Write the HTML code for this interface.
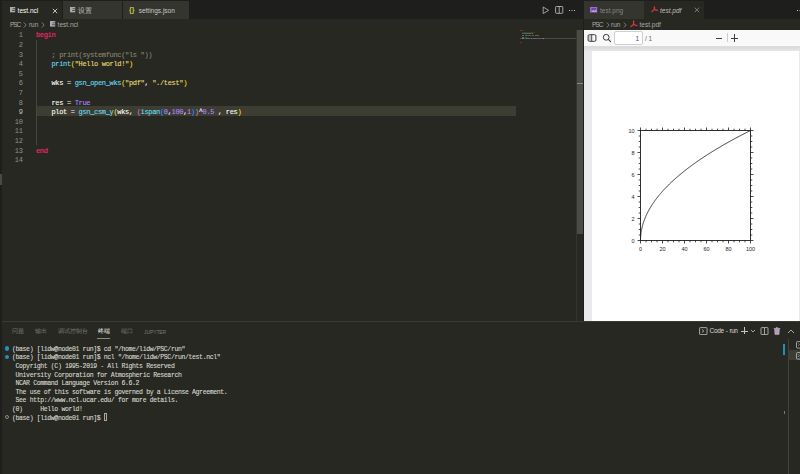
<!DOCTYPE html>
<html><head><meta charset="utf-8">
<style>
*{margin:0;padding:0;box-sizing:border-box}
html,body{width:800px;height:474px;overflow:hidden;background:#272822;font-family:"Liberation Sans",sans-serif;position:relative}
.a{position:absolute}
.ui{font-family:"Liberation Sans",sans-serif;font-size:6.5px;white-space:pre;line-height:1}
.mono{font-family:"Liberation Mono",monospace;white-space:pre}
.code{font-size:7px;letter-spacing:-0.33px;line-height:9.6px;height:9.6px;-webkit-text-stroke:0.12px currentColor}
.ln{font-family:"Liberation Mono",monospace;font-size:7px;letter-spacing:-0.33px;color:#90908a;text-align:right;width:22.6px;line-height:9.6px;height:9.6px}
.kw{color:#f92672}.fn{color:#66d9ef}.st{color:#e6db74}.nm{color:#ae81ff}.cm{color:#88846f}.w{color:#f8f8f2}
.b1{color:#ffd700}.b2{color:#da70d6}.b3{color:#179fff}
.term{font-family:"Liberation Mono",monospace;font-size:6.5px;letter-spacing:-0.37px;color:#d8d8d0;line-height:8.58px;height:8.58px;white-space:pre;-webkit-text-stroke:0.1px currentColor}
</style></head><body>

<!-- left strip -->
<div class="a" style="left:0;top:0;width:1.5px;height:474px;background:#1e1f1c"></div>
<div class="a" style="left:0;top:174px;width:2px;height:11px;background:#4a4b45"></div>

<!-- ===== GROUP 1 ===== -->
<div class="a" style="left:2px;top:0;width:582px;height:19px;background:#1e1f1c"></div>
<!-- tabs -->
<div class="a" style="left:2px;top:1px;width:60px;height:18px;background:#272822"></div>
<div class="a" style="left:62px;top:1px;width:60px;height:18px;background:#34352f;border-left:1px solid #1e1f1c"></div>
<div class="a" style="left:122px;top:1px;width:67px;height:18px;background:#34352f;border-left:1px solid #1e1f1c"></div>

<!-- file icon test.ncl -->
<svg class="a" style="left:9.9px;top:6.9px" width="6" height="6" viewBox="0 0 6 6"><rect x="0" y="0" width="5.2" height="5.3" fill="#a8acb0"/><rect x="2.6" y="1.4" width="2.6" height="0.7" fill="#2e2f2a"/><rect x="2" y="3.2" width="3.2" height="0.7" fill="#2e2f2a"/></svg>
<div class="a ui" style="left:17.6px;top:7.7px;color:#ffffff">test.ncl</div>
<svg class="a" style="left:52px;top:7.5px" width="6" height="6" viewBox="0 0 6 6"><path d="M0.8 0.8 L5.2 5.2 M5.2 0.8 L0.8 5.2" stroke="#e8e8e8" stroke-width="0.8"/></svg>

<svg class="a" style="left:70px;top:6.9px" width="6" height="6" viewBox="0 0 6 6"><rect x="0" y="0" width="5.2" height="5.3" fill="#a8acb0"/><rect x="2.6" y="1.4" width="2.6" height="0.7" fill="#34352f"/><rect x="2" y="3.2" width="3.2" height="0.7" fill="#34352f"/></svg>
<div class="a ui" style="left:78px;top:7.5px;color:#c8c8c0">设置</div>

<div class="a ui" style="left:129px;top:5.8px;color:#cbcb41;font-size:7px;font-weight:bold">{}</div>
<div class="a ui" style="left:138.7px;top:7.7px;color:#c8c8c0">settings.json</div>

<!-- editor actions -->
<svg class="a" style="left:541px;top:6px" width="9" height="9" viewBox="0 0 9 9"><path d="M2.2 1 L7.6 4.3 L2.2 7.6 Z" fill="none" stroke="#c8c8c8" stroke-width="0.75" stroke-linejoin="round"/></svg>
<svg class="a" style="left:555px;top:6px" width="9" height="8" viewBox="0 0 9 8"><rect x="0.6" y="0.5" width="7.2" height="6.8" rx="0.8" fill="none" stroke="#c8c8c8" stroke-width="0.8"/><line x1="4.2" y1="0.5" x2="4.2" y2="7.3" stroke="#c8c8c8" stroke-width="0.8"/></svg>
<div class="a" style="left:568.5px;top:9.5px;width:1px;height:1px;background:#c5c5c5;box-shadow:2.5px 0 #c5c5c5,5px 0 #c5c5c5"></div>

<!-- breadcrumbs -->
<div class="a ui" style="left:9.9px;top:22.4px;color:#a9a9a4;letter-spacing:-1px">PSC</div>
<svg class="a" style="left:23px;top:22px" width="4" height="6" viewBox="0 0 4 6"><path d="M0.8 0.5 L3.2 3 L0.8 5.5" fill="none" stroke="#a9a9a4" stroke-width="0.65"/></svg>
<div class="a ui" style="left:28.9px;top:22.4px;color:#a9a9a4">run</div>
<svg class="a" style="left:41px;top:22px" width="4" height="6" viewBox="0 0 4 6"><path d="M0.8 0.5 L3.2 3 L0.8 5.5" fill="none" stroke="#a9a9a4" stroke-width="0.65"/></svg>
<svg class="a" style="left:50px;top:21.3px" width="6" height="6" viewBox="0 0 6 6"><rect x="0" y="0" width="5.2" height="5.6" fill="#a8acb0"/><rect x="2.6" y="1.5" width="2.6" height="0.7" fill="#3a3b36"/><rect x="2" y="3.4" width="3.2" height="0.7" fill="#3a3b36"/></svg>
<div class="a ui" style="left:57.6px;top:22.4px;color:#a9a9a4">test.ncl</div>

<!-- line highlight -->
<div class="a" style="left:36px;top:106px;width:480px;height:10px;background:#3e3d32"></div>
<!-- indent guide -->
<div class="a" style="left:35.6px;top:39.6px;width:1.3px;height:105.4px;background:#464741"></div>

<!-- line numbers -->
<div class="a" style="left:0;top:31.4px">
<div class="ln">1</div><div class="ln">2</div><div class="ln">3</div><div class="ln">4</div><div class="ln">5</div><div class="ln">6</div><div class="ln">7</div><div class="ln">8</div><div class="ln" style="color:#c2c2bf">9</div><div class="ln">10</div><div class="ln">11</div><div class="ln">12</div><div class="ln">13</div><div class="ln">14</div>
</div>

<!-- code -->
<div class="a" style="left:36px;top:31.4px">
<div class="mono code"><span class="kw">begin</span></div>
<div class="mono code"> </div>
<div class="mono code">    <span class="cm">; print(systemfunc("ls "))</span></div>
<div class="mono code">    <span class="fn">print</span><span class="b1">(</span><span class="st">"Hello world!"</span><span class="b1">)</span></div>
<div class="mono code"> </div>
<div class="mono code">    <span class="w">wks = </span><span class="fn">gsn_open_wks</span><span class="b1">(</span><span class="st">"pdf"</span><span class="w">, </span><span class="st">"./test"</span><span class="b1">)</span></div>
<div class="mono code"> </div>
<div class="mono code">    <span class="w">res = </span><span class="nm">True</span></div>
<div class="mono code">    <span class="w">plot = </span><span class="fn">gsn_csm_y</span><span class="b1">(</span><span class="w">wks, </span><span class="b2">(</span><span class="fn">ispan</span><span class="b3">(</span><span class="nm">0</span><span class="w">,</span><span class="nm">100</span><span class="w">,</span><span class="nm">1</span><span class="b3">)</span><span class="b2">)</span><span class="w">^</span><span class="nm">0.5</span><span class="w"> , res</span><span class="b1">)</span></div>
<div class="mono code"> </div>
<div class="mono code"> </div>
<div class="mono code"> </div>
<div class="mono code"><span class="kw">end</span></div>
<div class="mono code"> </div>
</div>

<!-- minimap -->
<div class="a" style="left:0;top:0;opacity:0.55">
<div class="a" style="left:520px;top:30px;width:2.5px;height:1px;background:#c02a5e"></div>
<div class="a" style="left:522px;top:32px;width:13px;height:1px;background:#4e4c40"></div>
<div class="a" style="left:522px;top:33px;width:2.5px;height:1px;background:#4a98ab"></div>
<div class="a" style="left:525px;top:33px;width:0.5px;height:1px;background:#b09a40"></div>
<div class="a" style="left:525.5px;top:33px;width:6.5px;height:1px;background:#9a9250"></div>
<div class="a" style="left:532px;top:33px;width:0.5px;height:1px;background:#b09a40"></div>
<div class="a" style="left:522px;top:35px;width:1.5px;height:1px;background:#9a9a94"></div>
<div class="a" style="left:525px;top:35px;width:6px;height:1px;background:#4a98ab"></div>
<div class="a" style="left:531.5px;top:35px;width:2.5px;height:1px;background:#9a9250"></div>
<div class="a" style="left:535px;top:35px;width:4px;height:1px;background:#9a9250"></div>
<div class="a" style="left:522px;top:37px;width:1.5px;height:1px;background:#9a9a94"></div>
<div class="a" style="left:525px;top:37px;width:2px;height:1px;background:#7a5fb0"></div>
</div>
<div class="a" style="left:520px;top:38px;width:56px;height:1px;background:#4a4a42"></div>
<div class="a" style="left:0;top:0;opacity:0.55">
<div class="a" style="left:522px;top:38px;width:2px;height:1px;background:#9a9a94"></div>
<div class="a" style="left:525.5px;top:38px;width:4.5px;height:1px;background:#4a98ab"></div>
<div class="a" style="left:530.5px;top:38px;width:1.5px;height:1px;background:#9a9a94"></div>
<div class="a" style="left:533px;top:38px;width:2.5px;height:1px;background:#4a98ab"></div>
<div class="a" style="left:536px;top:38px;width:4.5px;height:1px;background:#7a5fb0"></div>
<div class="a" style="left:542px;top:38px;width:2px;height:1px;background:#9a9a94"></div>
<div class="a" style="left:520px;top:42px;width:1.5px;height:1px;background:#c02a5e"></div>
</div>

<!-- scrollbar -->
<div class="a" style="left:576px;top:29.5px;width:1px;height:291.5px;background:#34352f"></div>
<div class="a" style="left:576.5px;top:30px;width:7px;height:204px;background:#4a4b45"></div>
<div class="a" style="left:576.5px;top:83px;width:7px;height:1px;background:#8a8a84"></div>
<!-- group divider -->
<div class="a" style="left:583px;top:19px;width:1px;height:302px;background:#1e1f1c"></div>

<!-- ===== GROUP 2 ===== -->
<div class="a" style="left:584px;top:0;width:216px;height:19px;background:#1e1f1c"></div>
<div class="a" style="left:584px;top:1px;width:60px;height:18px;background:#34352f"></div>
<div class="a" style="left:644px;top:1px;width:60px;height:18px;background:#272822"></div>
<!-- image icon -->
<svg class="a" style="left:590px;top:6.5px" width="8" height="6" viewBox="0 0 8 6"><rect x="0" y="0" width="7.2" height="5.5" fill="#9a6ad0"/><path d="M1.5 5 L3.2 3 L4.5 4 L6 2.5 L6.5 5 Z" fill="#c89af0"/><path d="M1.5 1 L6 1 L6 2.6 L4.5 3.6 L3.2 2.4 L1.5 4 Z" fill="#6a4a90"/></svg>
<div class="a ui" style="left:600px;top:7.7px;color:#85857e">test.png</div>
<!-- pdf icon -->
<svg class="a" style="left:650px;top:5px" width="9" height="8" viewBox="0 0 9 8"><path d="M4.4 2 L4.4 4.4 L2 6.5 M4.4 4.4 L7.5 5.4" fill="none" stroke="#d9363e" stroke-width="1.3" stroke-linecap="round" stroke-linejoin="round"/></svg>
<div class="a ui" style="left:660px;top:7.7px;color:#bdbdb6;font-style:italic">test.pdf</div>
<svg class="a" style="left:694px;top:7.2px" width="6" height="6" viewBox="0 0 6 6"><path d="M0.6 0.6 L5.2 5.2 M5.2 0.6 L0.6 5.2" stroke="#8e8e88" stroke-width="0.8"/></svg>
<div class="a" style="left:797px;top:9.5px;width:1px;height:1px;background:#c5c5c5;box-shadow:2.5px 0 #c5c5c5"></div>

<!-- breadcrumbs 2 -->
<div class="a ui" style="left:592px;top:22.4px;color:#a9a9a4;letter-spacing:-1px">PSC</div>
<svg class="a" style="left:605.5px;top:22px" width="4" height="6" viewBox="0 0 4 6"><path d="M0.8 0.5 L3.2 3 L0.8 5.5" fill="none" stroke="#a9a9a4" stroke-width="0.65"/></svg>
<div class="a ui" style="left:611px;top:22.4px;color:#a9a9a4">run</div>
<svg class="a" style="left:623.3px;top:22px" width="4" height="6" viewBox="0 0 4 6"><path d="M0.8 0.5 L3.2 3 L0.8 5.5" fill="none" stroke="#a9a9a4" stroke-width="0.65"/></svg>
<svg class="a" style="left:629px;top:20px" width="9" height="8" viewBox="0 0 9 8"><path d="M4.6 1 L4.6 4.5 L2 6.6 M4.6 4.5 L7.9 5.6" fill="none" stroke="#d9363e" stroke-width="1.3" stroke-linecap="round" stroke-linejoin="round"/></svg>
<div class="a ui" style="left:639.5px;top:22.4px;color:#a9a9a4">test.pdf</div>

<!-- PDF viewer -->
<div class="a" style="left:584px;top:29.5px;width:216px;height:292px;background:#eaeaec"></div>
<div class="a" style="left:584px;top:46.5px;width:216px;height:4.5px;background:linear-gradient(#d9d9db,#e7e7e9)"></div>
<div class="a" style="left:584px;top:29.5px;width:216px;height:17.3px;background:#f9f9fa;border-bottom:0.8px solid #dcdcdf"></div>
<!-- toolbar icons -->
<svg class="a" style="left:587px;top:33px" width="10" height="10" viewBox="0 0 10 10"><rect x="1.6" y="2.2" width="3" height="5.6" fill="#c8c8c8"/><rect x="1.1" y="1.7" width="7.8" height="6.6" rx="1.2" fill="none" stroke="#3a3a3a" stroke-width="1"/><line x1="4.7" y1="1.7" x2="4.7" y2="8.3" stroke="#3a3a3a" stroke-width="0.9"/></svg>
<svg class="a" style="left:602px;top:32.5px" width="10" height="10" viewBox="0 0 10 10"><circle cx="4.2" cy="4.3" r="2.9" fill="none" stroke="#333" stroke-width="0.95"/><line x1="6.3" y1="6.4" x2="8.8" y2="8.9" stroke="#333" stroke-width="1.1"/></svg>
<div class="a" style="left:614.4px;top:31.3px;width:28.6px;height:13.3px;background:#fff;border:0.7px solid #cfcfd2;border-radius:2px"></div>
<div class="a ui" style="left:635.5px;top:35.7px;color:#4a4a7a">1</div>
<div class="a ui" style="left:645px;top:35.7px;color:#6a6a60">/ 1</div>
<div class="a" style="left:716px;top:37.5px;width:6px;height:0.9px;background:#3c3c3c"></div>
<div class="a" style="left:727px;top:33px;width:0.8px;height:9px;background:#cfcfd2"></div>
<div class="a" style="left:731px;top:37.5px;width:7px;height:0.9px;background:#3c3c3c"></div>
<div class="a" style="left:734.1px;top:34px;width:0.9px;height:8px;background:#3c3c3c"></div>

<!-- page -->
<div class="a" style="left:591.5px;top:50.5px;width:207.5px;height:271px;background:#ffffff"></div>

<!-- plot -->
<svg class="a" style="left:620px;top:120px" width="150" height="140" viewBox="620 120 150 140">
<g stroke="#1c1c1c" stroke-width="0.9" fill="none">
<rect x="640.5" y="130.5" width="110.00" height="110.00"/>
<path stroke-width="0.8" d="M640.50 240.5v3.0M640.50 130.5v-3.0M646.00 240.5v1.8M646.00 130.5v-1.8M651.50 240.5v1.8M651.50 130.5v-1.8M657.00 240.5v1.8M657.00 130.5v-1.8M662.50 240.5v3.0M662.50 130.5v-3.0M668.00 240.5v1.8M668.00 130.5v-1.8M673.50 240.5v1.8M673.50 130.5v-1.8M679.00 240.5v1.8M679.00 130.5v-1.8M684.50 240.5v3.0M684.50 130.5v-3.0M690.00 240.5v1.8M690.00 130.5v-1.8M695.50 240.5v1.8M695.50 130.5v-1.8M701.00 240.5v1.8M701.00 130.5v-1.8M706.50 240.5v3.0M706.50 130.5v-3.0M712.00 240.5v1.8M712.00 130.5v-1.8M717.50 240.5v1.8M717.50 130.5v-1.8M723.00 240.5v1.8M723.00 130.5v-1.8M728.50 240.5v3.0M728.50 130.5v-3.0M734.00 240.5v1.8M734.00 130.5v-1.8M739.50 240.5v1.8M739.50 130.5v-1.8M745.00 240.5v1.8M745.00 130.5v-1.8M750.50 240.5v3.0M750.50 130.5v-3.0M640.5 240.50h-3.0M750.5 240.50h3.0M640.5 235.00h-1.8M750.5 235.00h1.8M640.5 229.50h-1.8M750.5 229.50h1.8M640.5 224.00h-1.8M750.5 224.00h1.8M640.5 218.50h-3.0M750.5 218.50h3.0M640.5 213.00h-1.8M750.5 213.00h1.8M640.5 207.50h-1.8M750.5 207.50h1.8M640.5 202.00h-1.8M750.5 202.00h1.8M640.5 196.50h-3.0M750.5 196.50h3.0M640.5 191.00h-1.8M750.5 191.00h1.8M640.5 185.50h-1.8M750.5 185.50h1.8M640.5 180.00h-1.8M750.5 180.00h1.8M640.5 174.50h-3.0M750.5 174.50h3.0M640.5 169.00h-1.8M750.5 169.00h1.8M640.5 163.50h-1.8M750.5 163.50h1.8M640.5 158.00h-1.8M750.5 158.00h1.8M640.5 152.50h-3.0M750.5 152.50h3.0M640.5 147.00h-1.8M750.5 147.00h1.8M640.5 141.50h-1.8M750.5 141.50h1.8M640.5 136.00h-1.8M750.5 136.00h1.8M640.5 130.50h-3.0M750.5 130.50h3.0"/>
<polyline stroke-width="0.9" points="640.50,240.50 640.50,240.13 640.50,239.77 640.51,239.40 640.52,239.03 640.53,238.67 640.54,238.30 640.56,237.93 640.58,237.57 640.60,237.20 640.62,236.83 640.65,236.47 640.68,236.10 640.71,235.73 640.74,235.37 640.77,235.00 640.81,234.63 640.85,234.27 640.90,233.90 640.94,233.53 640.99,233.17 641.04,232.80 641.09,232.43 641.15,232.07 641.20,231.70 641.26,231.33 641.33,230.97 641.39,230.60 641.46,230.23 641.53,229.87 641.60,229.50 641.67,229.13 641.75,228.77 641.83,228.40 641.91,228.03 642.00,227.67 642.08,227.30 642.17,226.93 642.26,226.57 642.36,226.20 642.46,225.83 642.55,225.47 642.66,225.10 642.76,224.73 642.87,224.37 642.98,224.00 643.09,223.63 643.20,223.27 643.32,222.90 643.43,222.53 643.56,222.17 643.68,221.80 643.80,221.43 643.93,221.07 644.06,220.70 644.20,220.33 644.33,219.97 644.47,219.60 644.61,219.23 644.75,218.87 644.90,218.50 645.05,218.13 645.20,217.77 645.35,217.40 645.51,217.03 645.66,216.67 645.82,216.30 645.99,215.93 646.15,215.57 646.32,215.20 646.49,214.83 646.66,214.47 646.84,214.10 647.01,213.73 647.19,213.37 647.38,213.00 647.56,212.63 647.75,212.27 647.94,211.90 648.13,211.53 648.32,211.17 648.52,210.80 648.72,210.43 648.92,210.07 649.12,209.70 649.33,209.33 649.54,208.97 649.75,208.60 649.96,208.23 650.18,207.87 650.40,207.50 650.62,207.13 650.84,206.77 651.07,206.40 651.30,206.03 651.53,205.67 651.76,205.30 652.00,204.93 652.24,204.57 652.48,204.20 652.72,203.83 652.97,203.47 653.22,203.10 653.47,202.73 653.72,202.37 653.98,202.00 654.23,201.63 654.49,201.27 654.76,200.90 655.02,200.53 655.29,200.17 655.56,199.80 655.83,199.43 656.11,199.07 656.38,198.70 656.66,198.33 656.95,197.97 657.23,197.60 657.52,197.23 657.81,196.87 658.10,196.50 658.39,196.13 658.69,195.77 658.99,195.40 659.29,195.03 659.60,194.67 659.90,194.30 660.21,193.93 660.52,193.57 660.84,193.20 661.16,192.83 661.47,192.47 661.80,192.10 662.12,191.73 662.45,191.37 662.77,191.00 663.11,190.63 663.44,190.27 663.78,189.90 664.11,189.53 664.46,189.17 664.80,188.80 665.14,188.43 665.49,188.07 665.84,187.70 666.20,187.33 666.55,186.97 666.91,186.60 667.27,186.23 667.63,185.87 668.00,185.50 668.37,185.13 668.74,184.77 669.11,184.40 669.49,184.03 669.86,183.67 670.24,183.30 670.63,182.93 671.01,182.57 671.40,182.20 671.79,181.83 672.18,181.47 672.58,181.10 672.97,180.73 673.37,180.37 673.77,180.00 674.18,179.63 674.59,179.27 675.00,178.90 675.41,178.53 675.82,178.17 676.24,177.80 676.66,177.43 677.08,177.07 677.50,176.70 677.93,176.33 678.36,175.97 678.79,175.60 679.22,175.23 679.66,174.87 680.10,174.50 680.54,174.13 680.98,173.77 681.43,173.40 681.88,173.03 682.33,172.67 682.78,172.30 683.24,171.93 683.70,171.57 684.16,171.20 684.62,170.83 685.09,170.47 685.56,170.10 686.03,169.73 686.50,169.37 686.98,169.00 687.45,168.63 687.93,168.27 688.42,167.90 688.90,167.53 689.39,167.17 689.88,166.80 690.37,166.43 690.87,166.07 691.36,165.70 691.86,165.33 692.37,164.97 692.87,164.60 693.38,164.23 693.89,163.87 694.40,163.50 694.91,163.13 695.43,162.77 695.95,162.40 696.47,162.03 697.00,161.67 697.52,161.30 698.05,160.93 698.58,160.57 699.12,160.20 699.66,159.83 700.19,159.47 700.74,159.10 701.28,158.73 701.83,158.37 702.38,158.00 702.93,157.63 703.48,157.27 704.04,156.90 704.59,156.53 705.16,156.17 705.72,155.80 706.28,155.43 706.85,155.07 707.42,154.70 708.00,154.33 708.57,153.97 709.15,153.60 709.73,153.23 710.31,152.87 710.90,152.50 711.49,152.13 712.08,151.77 712.67,151.40 713.27,151.03 713.86,150.67 714.46,150.30 715.07,149.93 715.67,149.57 716.28,149.20 716.89,148.83 717.50,148.47 718.12,148.10 718.73,147.73 719.35,147.37 719.98,147.00 720.60,146.63 721.23,146.27 721.86,145.90 722.49,145.53 723.12,145.17 723.76,144.80 724.40,144.43 725.04,144.07 725.68,143.70 726.33,143.33 726.98,142.97 727.63,142.60 728.28,142.23 728.94,141.87 729.60,141.50 730.26,141.13 730.92,140.77 731.59,140.40 732.26,140.03 732.93,139.67 733.60,139.30 734.28,138.93 734.96,138.57 735.64,138.20 736.32,137.83 737.01,137.47 737.70,137.10 738.39,136.73 739.08,136.37 739.77,136.00 740.47,135.63 741.17,135.27 741.88,134.90 742.58,134.53 743.29,134.17 744.00,133.80 744.71,133.43 745.43,133.07 746.14,132.70 746.86,132.33 747.59,131.97 748.31,131.60 749.04,131.23 749.77,130.87 750.50,130.50"/>
</g>
<g fill="#262626" font-family="Liberation Sans" font-size="5.5" text-anchor="middle">
<text x="640.50" y="250.6">0</text>
<text x="662.50" y="250.6">20</text>
<text x="684.50" y="250.6">40</text>
<text x="706.50" y="250.6">60</text>
<text x="728.50" y="250.6">80</text>
<text x="750.50" y="250.6">100</text>
</g><g fill="#262626" font-family="Liberation Sans" font-size="5.5" text-anchor="end">
<text x="634.6" y="242.50">0</text>
<text x="634.6" y="220.50">2</text>
<text x="634.6" y="198.50">4</text>
<text x="634.6" y="176.50">6</text>
<text x="634.6" y="154.50">8</text>
<text x="634.6" y="132.50">10</text>
</g></svg>

<!-- ===== PANEL ===== -->
<div class="a" style="left:1.5px;top:321px;width:798.5px;height:1px;background:#393a33"></div>
<div class="a ui" style="left:11.8px;top:329.3px;font-size:5.6px;color:#7a7a74">问题</div>
<div class="a ui" style="left:35px;top:329.3px;font-size:5.6px;color:#7a7a74">输出</div>
<div class="a ui" style="left:58px;top:329.3px;font-size:5.5px;color:#7a7a74">调试控制台</div>
<div class="a ui" style="left:97.6px;top:329.3px;font-size:5.7px;color:#f0f0f0">终端</div>
<div class="a" style="left:97px;top:337.5px;width:13px;height:0.9px;background:#8a8a80"></div>
<div class="a ui" style="left:121px;top:329.3px;font-size:5.5px;color:#7a7a74">端口</div>
<div class="a ui" style="left:144px;top:329.5px;font-size:5px;color:#7a7a74;letter-spacing:-0.1px">JUPYTER</div>

<!-- panel actions -->
<svg class="a" style="left:699px;top:327px" width="9" height="8" viewBox="0 0 9 8"><rect x="0.6" y="0.6" width="7.4" height="7" rx="0.6" fill="none" stroke="#c5c5c5" stroke-width="0.8"/><path d="M3 2.5 L4.8 4 L3 5.5" fill="none" stroke="#c5c5c5" stroke-width="0.8"/></svg>
<div class="a ui" style="left:709.5px;top:328px;color:#d8d8d2;font-size:6.5px;letter-spacing:-0.3px">Code</div><div class="a ui" style="left:725.8px;top:328px;color:#d8d8d2;font-size:6.5px">-</div><div class="a ui" style="left:729.6px;top:328px;color:#d8d8d2;font-size:6.5px;letter-spacing:-0.5px">run</div>
<div class="a" style="left:741px;top:330.7px;width:7px;height:0.7px;background:#c5c5c5"></div>
<div class="a" style="left:744.2px;top:327.3px;width:0.7px;height:7px;background:#c5c5c5"></div>
<svg class="a" style="left:750px;top:329px" width="6" height="4" viewBox="0 0 6 4"><path d="M1 1 L3 3 L5 1" fill="none" stroke="#c5c5c5" stroke-width="0.8"/></svg>
<svg class="a" style="left:760px;top:327px" width="9" height="8" viewBox="0 0 9 8"><rect x="1" y="0.6" width="7" height="7" rx="0.6" fill="none" stroke="#c5c5c5" stroke-width="0.8"/><line x1="4.5" y1="0.6" x2="4.5" y2="7.6" stroke="#c5c5c5" stroke-width="0.8"/></svg>
<svg class="a" style="left:773px;top:326.8px" width="8" height="8" viewBox="0 0 8 8"><path d="M1.6 2.2 L6.4 2.2 L6 7.6 L2 7.6 Z" fill="#b29cc4" stroke="#c5c5c5" stroke-width="0.5"/><rect x="0.8" y="1.3" width="6.4" height="0.8" fill="#c5c5c5"/><rect x="2.9" y="0.4" width="2.2" height="0.9" fill="#c5c5c5"/></svg>
<svg class="a" style="left:787px;top:328.5px" width="8" height="5" viewBox="0 0 8 5"><path d="M1 4 L4 1 L7 4" fill="none" stroke="#c5c5c5" stroke-width="0.8"/></svg>

<!-- terminal tabs list -->
<div class="a" style="left:788px;top:339px;width:1px;height:135px;background:#414339"></div>
<div class="a" style="left:789px;top:350.2px;width:11px;height:10px;background:#3c3d36"></div>
<svg class="a" style="left:796px;top:341px" width="4" height="8" viewBox="0 0 4 8"><rect x="0.5" y="0.6" width="6" height="6.5" rx="0.8" fill="none" stroke="#c0c0ba" stroke-width="0.8"/><path d="M2.2 2.4 L3.4 3.6 L2.2 4.8" fill="none" stroke="#c0c0ba" stroke-width="0.6"/></svg>
<svg class="a" style="left:796px;top:351.5px" width="4" height="8" viewBox="0 0 4 8"><rect x="0.5" y="0.6" width="6" height="6.5" rx="0.8" fill="none" stroke="#c0c0ba" stroke-width="0.8"/><path d="M2.2 2.4 L3.4 3.6 L2.2 4.8" fill="none" stroke="#c0c0ba" stroke-width="0.6"/></svg>

<!-- terminal scrollbar marks -->
<div class="a" style="left:783.4px;top:344px;width:2px;height:10.5px;background:#2a8ab8"></div>
<div class="a" style="left:783.5px;top:411px;width:1.5px;height:3px;background:#7a7a74"></div>

<!-- terminal -->
<div class="a" style="left:5px;top:346.3px;width:4.4px;height:4.4px;border-radius:50%;background:#2590bd"></div>
<div class="a" style="left:5px;top:354.9px;width:4.4px;height:4.4px;border-radius:50%;background:#2590bd"></div>
<div class="a" style="left:5.2px;top:415px;width:4px;height:4px;border-radius:50%;border:0.7px solid #8a8a84"></div>
<div class="a" style="left:12px;top:345.9px">
<div class="term">(base) [lidw@node01 run]$ cd "/home/lidw/PSC/run"</div>
<div class="term">(base) [lidw@node01 run]$ ncl "/home/lidw/PSC/run/test.ncl"</div>
<div class="term"> Copyright (C) 1995-2019 - All Rights Reserved</div>
<div class="term"> University Corporation for Atmospheric Research</div>
<div class="term"> NCAR Command Language Version 6.6.2</div>
<div class="term"> The use of this software is governed by a License Agreement.</div>
<div class="term"> See http://www.ncl.ucar.edu/ for more details.</div>
<div class="term">(0)     Hello world!</div>
<div class="term">(base) [lidw@node01 run]$ </div>
</div>
<div class="a" style="left:103.5px;top:412.8px;width:3.8px;height:8.4px;border:0.5px solid #a8a8a0"></div>

</body></html>
